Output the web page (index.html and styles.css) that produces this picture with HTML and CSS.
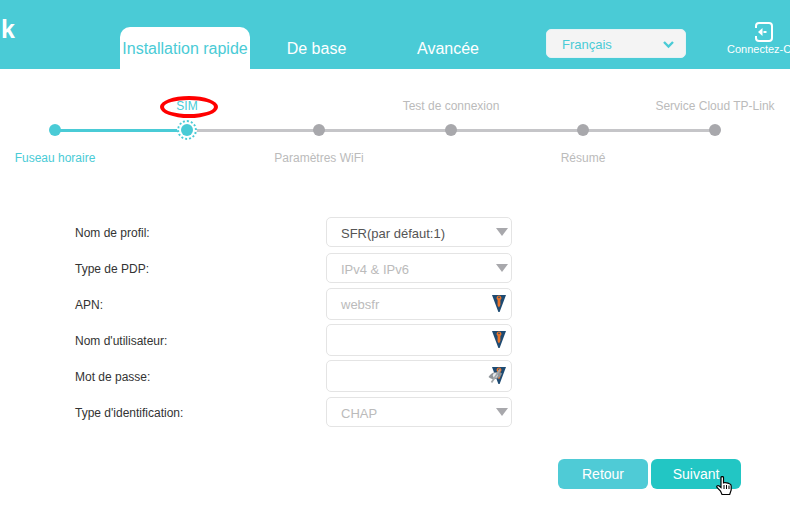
FILE: index.html
```html
<!DOCTYPE html>
<html>

<head>
    <title>Installation rapide</title>
    <link rel="stylesheet" href="styles.css">
</head>

<body>
    <svg class="defs" width="0" height="0">
        <symbol id="keyShield" viewBox="0 0 14 17">
            <path d="M0 0H14L7.6 17H6.4Z" fill="#1d4a72" />
            <path d="M7 0.5a2.4 2.4 0 0 1 1.4 4.4V10L7 12.5 5.6 10.5V4.900A2.4 2.4 0 0 1 7 0.5Z" fill="#e8742a" />
            <circle cx="7" cy="2.4" r="0.8" fill="#1d4a72" />
        </symbol>
    </svg>

    <div id="header">
        <div class="logo">k</div>
        <ul id="tabs">
            <li class="tab active">Installation rapide</li>
            <li class="tab base">De base</li>
            <li class="tab advanced">Avancée</li>
        </ul>
        <div class="langBox">
            <span>Français</span>
            <svg width="13" height="9" viewBox="0 0 13 9">
                <path d="M2 2l4.5 4.5L11 2" fill="none" stroke="#4acbd6" stroke-width="2.4" />
            </svg>
        </div>
        <div class="login">
            <svg width="18" height="20" viewBox="0 0 18 20">
                <rect x="1" y="1" width="16" height="18" rx="3" fill="none" stroke="#fff" stroke-width="2" />
                <path d="M0 6h3v8H0z" fill="#4acbd6" />
                <path d="M3 10l4.500-4v8zM8.500 9h3v2h-3z" fill="#fff" />
            </svg>
            <span>Connectez-C</span>
        </div>
    </div>

    <div id="stepper">
        <div class="step done first"><span class="stepLabel"></span><span class="dot"></span><span class="stepLabel">Fuseau horaire</span></div>
        <div class="step current"><span class="stepLabel">SIM<i class="ring"></i></span><span class="dot"></span><span class="stepLabel"></span></div>
        <div class="step"><span class="stepLabel"></span><span class="dot"></span><span class="stepLabel">Paramètres WiFi</span></div>
        <div class="step"><span class="stepLabel">Test de connexion</span><span class="dot"></span><span class="stepLabel"></span></div>
        <div class="step"><span class="stepLabel"></span><span class="dot"></span><span class="stepLabel">Résumé</span></div>
        <div class="step last"><span class="stepLabel">Service Cloud TP-Link</span><span class="dot"></span><span class="stepLabel"></span></div>
    </div>

    <div id="form">
        <label>Nom de profil:</label>
        <div class="field select dark">SFR(par défaut:1)<span class="arrow"></span></div>
        <label>Type de PDP:</label>
        <div class="field select">IPv4 &amp; IPv6<span class="arrow"></span></div>
        <label>APN:</label>
        <div class="field input">websfr<svg class="key"><use href="#keyShield" /></svg></div>
        <label>Nom d'utilisateur:</label>
        <div class="field input"><svg class="key"><use href="#keyShield" /></svg></div>
        <label>Mot de passe:</label>
        <div class="field input">
            <svg class="key"><use href="#keyShield" /></svg>
            <svg class="eye" width="15" height="14" viewBox="0 0 15 14">
                <path d="M0.500 8C3 3.500 9 1.500 14 4.500 12 9.500 6 12.500 0.500 8Z" fill="#8f9499" />
                <circle cx="7.200" cy="6.500" r="2.400" fill="#e9ecee" />
                <path d="M3.500 13.500L12 0.500" stroke="#a4a8ab" stroke-width="1.800" />
            </svg>
        </div>
        <label>Type d'identification:</label>
        <div class="field select">CHAP<span class="arrow"></span></div>
    </div>

    <div id="actions">
        <button class="btn back">Retour</button>
        <button class="btn next">Suivant</button>
        <svg class="cursor" width="18" height="20" viewBox="0 0 18 20">
            <path d="M5 1.500c0-1.300 2.500-1.300 2.500 0V7l1.500-.5 1.500.3 1.500.4 1.500.5c1.300.4 1.700 1.200 1.700 2.300V14l-1.500 4.500H6L4.500 15 1 11.500c-.8-1.300.6-2.500 1.800-1.700L5 11.500Z" fill="#fff" stroke="#000" stroke-width="1.200" />
            <path d="M8 9v4M10.500 9v4M13 9.500V13" stroke="#000" stroke-width="1" />
        </svg>
    </div>
</body>

</html>
```

FILE: styles.css
```css
html, body {
    margin: 0;
    padding: 0;
    height: 100%;
    overflow: hidden;
}

body {
    background: #fff;
    color: #333;
    font-family: "Liberation Sans", Arial, sans-serif;
    font-size: 12px;
}

.defs {
    display: block;
    height: 0;
}

#header {
    height: 69px;
    background: #4acbd6;
    color: #fff;
    display: flex;
    align-items: flex-start;
    overflow: hidden;
}

.logo {
    width: 118px;
    flex: none;
    padding: 15px 0 0 1px;
    font-size: 25px;
    font-weight: bold;
    line-height: 28px;
}

#tabs {
    list-style: none;
    margin: 0;
    padding: 27px 0 0;
    display: flex;
    flex: none;
    width: 426px;
    margin-left: 1px;
}

.tab {
    height: 42px;
    line-height: 43px;
    font-size: 16px;
    white-space: nowrap;
    text-align: center;
}

.tab.active {
    width: 130px;
    background: #fff;
    color: #4acbd6;
    border-radius: 10px 10px 0 0;
}

.tab.base {
    width: 133px;
}

.tab.advanced {
    width: 130px;
}

.langBox {
    flex: none;
    box-sizing: border-box;
    width: 140px;
    height: 29px;
    margin-top: 29px;
    padding: 2px 10px 0 15px;
    background: #f4f4f4;
    border: 1px solid #e6f3f5;
    border-radius: 5px;
    color: #4acbd6;
    font-size: 13px;
    display: flex;
    align-items: center;
    justify-content: space-between;
}

.login {
    flex: none;
    width: 63px;
    margin-left: 41px;
    padding-top: 22px;
    font-size: 11px;
    white-space: nowrap;
}

.login svg {
    display: block;
    margin: 0 0 1px 28px;
}

#stepper {
    display: flex;
    margin-left: -11px;
    padding-top: 28px;
    height: 70px;
}

.step {
    position: relative;
    flex: none;
    width: 132px;
    display: flex;
    flex-direction: column;
    align-items: center;
    color: #bbb;
    font-size: 12px;
}

.step::after {
    content: "";
    position: absolute;
    left: 66px;
    top: 32px;
    width: 132px;
    height: 3px;
    background: #c5c5c8;
}

.step.done::after {
    background: #4acbd6;
}

.step.last::after {
    display: none;
}

.step.done,
.step.current {
    color: #4acbd6;
}

.stepLabel {
    position: relative;
    height: 18px;
    line-height: 18px;
    white-space: nowrap;
}

.dot {
    position: relative;
    z-index: 1;
    width: 12px;
    height: 12px;
    margin: 9px 0 13px;
    border-radius: 50%;
    background: #a8a8ac;
}

.step.done .dot {
    background: #4acbd6;
}

.step.current .dot {
    background: transparent;
}

.step.current .dot::before {
    content: "";
    position: absolute;
    left: -4px;
    top: -4px;
    width: 16px;
    height: 16px;
    border: 2px dotted #4acbd6;
    border-radius: 50%;
    background: #fff;
}

.step.current .dot::after {
    content: "";
    position: absolute;
    left: 0;
    top: 0;
    width: 12px;
    height: 12px;
    border-radius: 50%;
    background: #4acbd6;
}

.ring {
    position: absolute;
    left: -16px;
    top: -1px;
    width: 50px;
    height: 14px;
    border: 4px solid #f00;
    border-radius: 50%;
}

#form {
    display: grid;
    grid-template-columns: 251px 186px;
    grid-auto-rows: 36px;
    align-items: center;
    margin: 47px 0 0 75px;
}

#form label {
    padding-top: 1px;
    font-size: 12px;
    color: #333;
}

.field {
    box-sizing: border-box;
    position: relative;
    border: 1px solid #e4e4e4;
    border-radius: 5px;
    padding-left: 14px;
    display: flex;
    align-items: center;
    color: #bbb;
    font-size: 13px;
}

.field.select {
    height: 30px;
    padding-top: 2px;
}

.field.input {
    height: 32px;
}

.field.dark {
    color: #555;
}

.arrow {
    position: absolute;
    right: 3px;
    top: 10px;
    border-left: 6px solid transparent;
    border-right: 6px solid transparent;
    border-top: 8px solid #a8a8ac;
}

.key {
    position: absolute;
    right: 5px;
    top: 6px;
    width: 14px;
    height: 17px;
}

.eye {
    position: absolute;
    right: 8px;
    top: 8px;
}

#actions {
    position: relative;
    display: flex;
    justify-content: flex-end;
    gap: 3px;
    width: 741px;
    margin-top: 29px;
}

.btn {
    width: 90px;
    height: 30px;
    padding: 0;
    border: none;
    border-radius: 6px;
    color: #fff;
    font-family: inherit;
    font-size: 14px;
}

.btn.back {
    background: #4fcbd6;
}

.btn.next {
    background: #22c6c4;
}

.cursor {
    position: absolute;
    left: 716px;
    top: 17px;
}
```
